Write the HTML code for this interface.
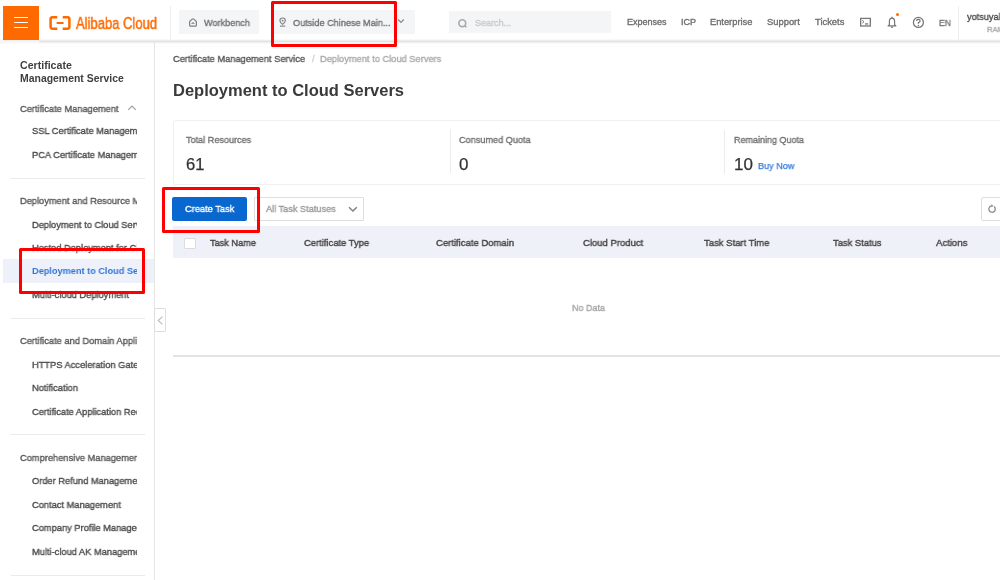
<!DOCTYPE html>
<html><head><meta charset="utf-8"><style>
html,body{margin:0;padding:0;width:1000px;height:580px;overflow:hidden;background:#fff;font-family:"Liberation Sans", sans-serif}
.t{position:absolute;white-space:nowrap;line-height:0;height:0;-webkit-text-stroke-width:0.35px;will-change:transform}
#wrap{position:absolute;left:0;top:0;width:1000px;height:580px;filter:blur(0.5px)}
</style></head><body><div id="wrap">
<div style="position:absolute;left:0px;top:0px;width:1000px;height:40px;background:#fff"></div>
<div style="position:absolute;left:0px;top:39.3px;width:1000px;height:5px;background:linear-gradient(#fff,#e2e2e2 48%,#f3f3f3 75%,#fdfdfd)"></div>
<div style="position:absolute;left:0px;top:40.2px;width:3px;height:4px;background:#f6f6f6"></div>
<div style="position:absolute;left:3px;top:40.2px;width:36px;height:4px;background:linear-gradient(#f0f0f0,#f8f8f8 60%,#fdfdfd)"></div>
<div style="position:absolute;left:3px;top:6px;width:36px;height:34.3px;background:#ff6a00"></div>
<div style="position:absolute;left:13.5px;top:16.6px;width:14.5px;height:1.3px;background:#fff;border-radius:1px"></div>
<div style="position:absolute;left:13.5px;top:21.8px;width:14.5px;height:1.3px;background:#fff;border-radius:1px"></div>
<div style="position:absolute;left:13.5px;top:27.0px;width:14.5px;height:1.3px;background:#fff;border-radius:1px"></div>
<svg style="position:absolute;left:48px;top:15px" width="24" height="16" viewBox="0 0 24 16">
<path d="M9.3 2.3 H4.5 Q2.6 2.3 2.6 4.2 V11.8 Q2.6 13.7 4.5 13.7 H9.3" fill="none" stroke="#ff6a00" stroke-width="2.5"/>
<path d="M14.7 2.3 H19.5 Q21.4 2.3 21.4 4.2 V11.8 Q21.4 13.7 19.5 13.7 H14.7" fill="none" stroke="#ff6a00" stroke-width="2.5"/>
<rect x="8.6" y="7" width="7" height="2.1" rx="0.5" fill="#ff6a00"/></svg>
<div class="t" style="left:76px;top:23.25px;font-size:16.300px;color:#ff6a00;font-weight:400;transform:scaleX(0.80);transform-origin:0 0;-webkit-text-stroke:0.45px #ff6a00;">Alibaba Cloud</div>
<div style="position:absolute;left:169.5px;top:6px;width:1px;height:34px;background:#eee"></div>
<div style="position:absolute;left:179px;top:10px;width:80px;height:23.6px;background:#f4f5f7"></div>
<svg style="position:absolute;left:188px;top:17px" width="10" height="11" viewBox="0 0 10 11">
<path d="M1.6 5 Q1.6 4.4 2.1 4 L4.3 2.1 Q5 1.5 5.7 2.1 L7.9 4 Q8.4 4.4 8.4 5 V8.2 Q8.4 9.1 7.5 9.1 H2.5 Q1.6 9.1 1.6 8.2 Z" fill="none" stroke="#808080" stroke-width="1.2" stroke-linejoin="round"/><path d="M3.6 6.6 Q5 5.3 6.4 6.6" fill="none" stroke="#808080" stroke-width="1.1"/></svg>
<div class="t" style="left:204px;top:22.52px;font-size:9.464px;color:#707070;font-weight:400;transform:scaleX(0.9615);transform-origin:0 0;">Workbench</div>
<div style="position:absolute;left:273px;top:10px;width:142px;height:23.6px;background:#f4f5f7"></div>
<svg style="position:absolute;left:279px;top:17px" width="8" height="10" viewBox="0 0 8 10">
<path d="M3.6 7.4 C1.9 6.1 0.9 5 0.9 3.7 A2.7 2.7 0 0 1 6.3 3.7 C6.3 5 5.3 6.1 3.6 7.4Z" fill="none" stroke="#808080" stroke-width="1.1"/><circle cx="3.6" cy="3.7" r="0.9" fill="#808080"/><path d="M1 9.1 H6.3" stroke="#808080" stroke-width="1.1"/></svg>
<div class="t" style="left:293px;top:22.50px;font-size:9.516px;color:#707070;font-weight:400;transform:scaleX(0.9615);transform-origin:0 0;">Outside Chinese Main...</div>
<svg style="position:absolute;left:397px;top:18px" width="8" height="6" viewBox="0 0 8 6"><path d="M1.2 1.5 L4 4.3 L6.8 1.5" fill="none" stroke="#888" stroke-width="1.2"/></svg>
<div style="position:absolute;left:449px;top:10.7px;width:162px;height:22.6px;background:#f4f5f7"></div>
<svg style="position:absolute;left:457px;top:18px" width="11" height="11" viewBox="0 0 11 11"><circle cx="5.3" cy="5.2" r="3.4" fill="none" stroke="#a8a8a8" stroke-width="1.6"/><path d="M7.7 7.6 L9.4 9.3" stroke="#a8a8a8" stroke-width="1.6"/></svg>
<div class="t" style="left:475px;top:22.56px;font-size:9.360px;color:#c8c8c8;font-weight:400;transform:scaleX(0.9615);transform-origin:0 0;">Search...</div>
<div class="t" style="left:626.5px;top:22.48px;font-size:9.000px;color:#6e6e6e;font-weight:400;">Expenses</div>
<div class="t" style="left:681px;top:22.48px;font-size:9.000px;color:#6e6e6e;font-weight:400;">ICP</div>
<div class="t" style="left:710px;top:22.38px;font-size:9.300px;color:#6e6e6e;font-weight:400;">Enterprise</div>
<div class="t" style="left:767.4px;top:22.34px;font-size:9.400px;color:#6e6e6e;font-weight:400;">Support</div>
<div class="t" style="left:815.4px;top:22.34px;font-size:9.400px;color:#6e6e6e;font-weight:400;">Tickets</div>
<svg style="position:absolute;left:859px;top:17px" width="13" height="11" viewBox="0 0 13 11"><rect x="1.65" y="1.4" width="9.7" height="7.6" fill="none" stroke="#777" stroke-width="1.3"/><path d="M3.3 3.3 L5 4.7 L3.3 6.1" fill="none" stroke="#777" stroke-width="1"/><rect x="6" y="6.3" width="3.2" height="1.3" fill="#777"/></svg>
<svg style="position:absolute;left:887px;top:16px" width="10" height="12" viewBox="0 0 10 12"><path d="M5 0.7 V2" stroke="#777" stroke-width="1.2"/><path d="M2.4 8.8 V5.4 Q2.4 2.2 5 2.2 Q7.6 2.2 7.6 5.4 V8.8 L8.9 9.9 H1.1 Z" fill="none" stroke="#777" stroke-width="1.2" stroke-linejoin="round"/><path d="M3.9 11.2 H6.1" stroke="#777" stroke-width="1.2"/></svg>
<div style="position:absolute;left:896.2px;top:12.7px;width:3px;height:3px;background:#ff6a00;border-radius:50%"></div>
<svg style="position:absolute;left:912px;top:16px" width="13" height="13" viewBox="0 0 13 13"><circle cx="6.4" cy="6.4" r="5.0" fill="none" stroke="#777" stroke-width="1.3"/><path d="M4.7 5.1 Q4.7 3.3 6.4 3.3 Q8.1 3.3 8.1 4.9 Q8.1 5.9 6.4 6.6 V7.7" fill="none" stroke="#777" stroke-width="1.25"/><circle cx="6.4" cy="9.5" r="0.75" fill="#777"/></svg>
<div class="t" style="left:939.2px;top:22.70px;font-size:8.944px;color:#777;font-weight:400;transform:scaleX(0.9615);transform-origin:0 0;">EN</div>
<div style="position:absolute;left:958px;top:6px;width:1px;height:34px;background:#eee"></div>
<div class="t" style="left:966.7px;top:16.88px;font-size:9.568px;color:#4a4a4a;font-weight:400;transform:scaleX(0.9615);transform-origin:0 0;">yotsuyak</div>
<div class="t" style="left:987px;top:30.06px;font-size:7.904px;color:#aaa;font-weight:400;transform:scaleX(0.9615);transform-origin:0 0;">RAM</div>
<div style="position:absolute;left:154px;top:42px;width:1.3px;height:538px;background:#e6e6e6"></div>
<div class="t" style="left:20px;top:65.03px;font-size:10.600px;color:#404040;font-weight:700;-webkit-text-stroke-width:0">Certificate</div>
<div class="t" style="left:20px;top:78.78px;font-size:10.450px;color:#404040;font-weight:700;-webkit-text-stroke-width:0">Management Service</div>
<div style="position:absolute;left:0;top:0;width:137px;height:580px;overflow:hidden">
<div class="t" style="left:20px;top:108.65px;font-size:9.672px;color:#585858;font-weight:400;transform:scaleX(0.9615);transform-origin:0 0">Certificate Management</div>
<div class="t" style="left:32px;top:131.45px;font-size:9.672px;color:#4a4a4a;font-weight:400;transform:scaleX(0.9615);transform-origin:0 0">SSL Certificate Management</div>
<div class="t" style="left:32px;top:154.75px;font-size:9.672px;color:#4a4a4a;font-weight:400;transform:scaleX(0.9615);transform-origin:0 0">PCA Certificate Management</div>
<div class="t" style="left:20px;top:201.35px;font-size:9.672px;color:#585858;font-weight:400;transform:scaleX(0.9615);transform-origin:0 0">Deployment and Resource Management</div>
<div class="t" style="left:32px;top:224.75px;font-size:9.672px;color:#4a4a4a;font-weight:400;transform:scaleX(0.9615);transform-origin:0 0">Deployment to Cloud Servers</div>
<div class="t" style="left:32px;top:248.05px;font-size:9.672px;color:#4a4a4a;font-weight:400;transform:scaleX(0.9615);transform-origin:0 0">Hosted Deployment for Cloud</div>
</div>
<div style="position:absolute;left:3px;top:259.3px;width:150.7px;height:23.7px;background:#eef1f9"></div>
<div style="position:absolute;left:0;top:0;width:137px;height:580px;overflow:hidden">
<div class="t" style="left:32px;top:271.38px;font-size:9.568px;color:#2f76d6;font-weight:700;transform:scaleX(0.9615);transform-origin:0 0;-webkit-text-stroke-width:0">Deployment to Cloud Servers</div>
<div class="t" style="left:32px;top:295.05px;font-size:9.672px;color:#4a4a4a;font-weight:400;transform:scaleX(0.9615);transform-origin:0 0">Multi-cloud Deployment</div>
<div class="t" style="left:20px;top:341.45px;font-size:9.672px;color:#585858;font-weight:400;transform:scaleX(0.9615);transform-origin:0 0">Certificate and Domain Application</div>
<div class="t" style="left:32px;top:364.75px;font-size:9.672px;color:#4a4a4a;font-weight:400;transform:scaleX(0.9615);transform-origin:0 0">HTTPS Acceleration Gateway</div>
<div class="t" style="left:32px;top:388.35px;font-size:9.672px;color:#4a4a4a;font-weight:400;transform:scaleX(0.9615);transform-origin:0 0">Notification</div>
<div class="t" style="left:32px;top:411.65px;font-size:9.672px;color:#4a4a4a;font-weight:400;transform:scaleX(0.9615);transform-origin:0 0">Certificate Application Records</div>
<div class="t" style="left:20px;top:458.05px;font-size:9.672px;color:#585858;font-weight:400;transform:scaleX(0.9615);transform-origin:0 0">Comprehensive Management</div>
<div class="t" style="left:32px;top:481.45px;font-size:9.672px;color:#4a4a4a;font-weight:400;transform:scaleX(0.9615);transform-origin:0 0">Order Refund Management</div>
<div class="t" style="left:32px;top:504.95px;font-size:9.672px;color:#4a4a4a;font-weight:400;transform:scaleX(0.9615);transform-origin:0 0">Contact Management</div>
<div class="t" style="left:32px;top:528.35px;font-size:9.672px;color:#4a4a4a;font-weight:400;transform:scaleX(0.9615);transform-origin:0 0">Company Profile Management</div>
<div class="t" style="left:32px;top:551.85px;font-size:9.672px;color:#4a4a4a;font-weight:400;transform:scaleX(0.9615);transform-origin:0 0">Multi-cloud AK Management</div>
</div>
<svg style="position:absolute;left:127px;top:104px" width="10" height="8" viewBox="0 0 10 8"><path d="M1.2 5.9 L5 2.1 L8.8 5.9" fill="none" stroke="#a0a0a0" stroke-width="1.25"/></svg>
<div style="position:absolute;left:11px;top:178px;width:134px;height:1px;background:#eaeaea"></div>
<div style="position:absolute;left:11px;top:317.6px;width:134px;height:1px;background:#eaeaea"></div>
<div style="position:absolute;left:11px;top:434.3px;width:134px;height:1px;background:#eaeaea"></div>
<div style="position:absolute;left:11px;top:574.5px;width:134px;height:1px;background:#eaeaea"></div>
<div style="position:absolute;left:154px;top:308px;width:12px;height:24px;background:#fff;border:1px solid #dedede;border-radius:1px;box-sizing:border-box"></div>
<svg style="position:absolute;left:157px;top:316px" width="7" height="9" viewBox="0 0 7 9"><path d="M5.4 0.6 L1.2 4.5 L5.4 8.4" fill="none" stroke="#bbb" stroke-width="1.1"/></svg>
<div class="t" style="left:172.8px;top:59.05px;font-size:9.672px;color:#555;font-weight:400;transform:scaleX(0.9615);transform-origin:0 0;">Certificate Management Service</div>
<div class="t" style="left:312px;top:59.05px;font-size:9.672px;color:#d0d0d0;font-weight:400;transform:scaleX(0.9615);transform-origin:0 0;">/</div>
<div class="t" style="left:320.4px;top:59.05px;font-size:9.672px;color:#aaa;font-weight:400;transform:scaleX(0.9615);transform-origin:0 0;">Deployment to Cloud Servers</div>
<div class="t" style="left:172.8px;top:89.68px;font-size:16.500px;color:#3a3a3a;font-weight:700;-webkit-text-stroke-width:0">Deployment to Cloud Servers</div>
<div style="position:absolute;left:172.5px;top:120px;width:840px;height:64.5px;border:1px solid #efefef;border-radius:3px;box-sizing:border-box"></div>
<div style="position:absolute;left:449.5px;top:129px;width:1px;height:44px;background:#ececec"></div>
<div style="position:absolute;left:723.5px;top:130px;width:1px;height:44px;background:#ececec"></div>
<div class="t" style="left:185.7px;top:139.62px;font-size:9.464px;color:#707070;font-weight:400;transform:scaleX(0.9615);transform-origin:0 0;">Total Resources</div>
<div class="t" style="left:185.7px;top:164.75px;font-size:16.600px;color:#333;font-weight:400;-webkit-text-stroke-width:0.25px">61</div>
<div class="t" style="left:459.3px;top:139.70px;font-size:9.516px;color:#707070;font-weight:400;transform:scaleX(0.9615);transform-origin:0 0;">Consumed Quota</div>
<div class="t" style="left:459.3px;top:165.11px;font-size:17.000px;color:#333;font-weight:400;-webkit-text-stroke-width:0.25px">0</div>
<div class="t" style="left:733.5px;top:139.76px;font-size:9.360px;color:#707070;font-weight:400;transform:scaleX(0.9615);transform-origin:0 0;">Remaining Quota</div>
<div class="t" style="left:733.5px;top:165.11px;font-size:17.000px;color:#333;font-weight:400;-webkit-text-stroke-width:0.25px">10</div>
<div class="t" style="left:758.3px;top:165.62px;font-size:9.464px;color:#3479dc;font-weight:400;transform:scaleX(0.9615);transform-origin:0 0;-webkit-text-stroke-width:0.25px">Buy Now</div>
<div style="position:absolute;left:172.2px;top:197.2px;width:75.3px;height:23.4px;background:#0968cf;border-radius:2px"></div>
<div class="t" style="left:184.6px;top:209.25px;font-size:9.672px;color:#fff;font-weight:400;transform:scaleX(0.9615);transform-origin:0 0;">Create Task</div>
<div style="position:absolute;left:253.5px;top:197px;width:110px;height:23.6px;border:1px solid #dedede;border-radius:1px;box-sizing:border-box;background:#fff"></div>
<div class="t" style="left:266px;top:209.48px;font-size:9.568px;color:#999;font-weight:400;transform:scaleX(0.9615);transform-origin:0 0;">All Task Statuses</div>
<svg style="position:absolute;left:347px;top:206px" width="11" height="7" viewBox="0 0 11 7"><path d="M2 1.2 L5.9 5 L9.8 1.2" fill="none" stroke="#808080" stroke-width="1.5"/></svg>
<div style="position:absolute;left:980.7px;top:197px;width:30px;height:23.6px;border:1px solid #dedede;border-radius:2px;box-sizing:border-box;background:#fff"></div>
<svg style="position:absolute;left:987px;top:203px" width="11" height="11" viewBox="0 0 11 11"><path d="M7.1 3.6 A3.2 3.2 0 1 1 4.6 2.9" fill="none" stroke="#8a8a8a" stroke-width="1.3"/><path d="M4.3 1.2 L6.6 2.9 L4.3 4.2 Z" fill="#8a8a8a"/></svg>
<div style="position:absolute;left:172.5px;top:226.3px;width:840px;height:32px;background:#eff1f8"></div>
<div style="position:absolute;left:184.2px;top:237.6px;width:11.4px;height:11px;background:#fff;border:1px solid #dcdcdc;border-radius:1px;box-sizing:border-box"></div>
<div class="t" style="left:209.5px;top:243.08px;font-size:9.568px;color:#444;font-weight:400;transform:scaleX(0.9615);transform-origin:0 0;-webkit-text-stroke-width:0.4px">Task Name</div>
<div class="t" style="left:304.1px;top:243.01px;font-size:9.776px;color:#444;font-weight:400;transform:scaleX(0.9615);transform-origin:0 0;-webkit-text-stroke-width:0.4px">Certificate Type</div>
<div class="t" style="left:435.6px;top:242.98px;font-size:9.880px;color:#444;font-weight:400;transform:scaleX(0.9615);transform-origin:0 0;-webkit-text-stroke-width:0.4px">Certificate Domain</div>
<div class="t" style="left:582.9px;top:242.98px;font-size:9.880px;color:#444;font-weight:400;transform:scaleX(0.9615);transform-origin:0 0;-webkit-text-stroke-width:0.4px">Cloud Product</div>
<div class="t" style="left:704px;top:242.98px;font-size:9.880px;color:#444;font-weight:400;transform:scaleX(0.9615);transform-origin:0 0;-webkit-text-stroke-width:0.4px">Task Start Time</div>
<div class="t" style="left:832.6px;top:243.01px;font-size:9.776px;color:#444;font-weight:400;transform:scaleX(0.9615);transform-origin:0 0;-webkit-text-stroke-width:0.4px">Task Status</div>
<div class="t" style="left:936.4px;top:242.94px;font-size:9.984px;color:#444;font-weight:400;transform:scaleX(0.9615);transform-origin:0 0;-webkit-text-stroke-width:0.4px">Actions</div>
<div class="t" style="left:571.7px;top:307.76px;font-size:9.360px;color:#a6a6a6;font-weight:400;transform:scaleX(0.9615);transform-origin:0 0;">No Data</div>
<div style="position:absolute;left:172.5px;top:355.2px;width:840px;height:1.4px;background:#e4e4e4"></div>
<div style="position:absolute;left:270.5px;top:1px;width:126px;height:45.5px;border:3px solid #f00;border-radius:1.5px;box-sizing:border-box"></div>
<div style="position:absolute;left:162.3px;top:187px;width:97.8px;height:46px;border:3px solid #f00;border-radius:1.5px;box-sizing:border-box"></div>
<div style="position:absolute;left:19px;top:248px;width:126px;height:46px;border:3px solid #f00;border-radius:1.5px;box-sizing:border-box"></div>
</div></body></html>
